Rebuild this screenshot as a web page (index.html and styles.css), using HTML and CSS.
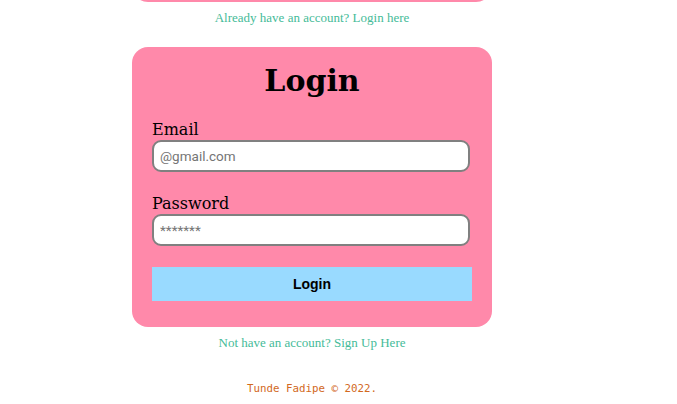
FILE: index.html
```html
<!DOCTYPE html>
<html lang="en">
<head>
<meta charset="utf-8">
<title>Login</title>
<link rel="stylesheet" href="styles.css">
</head>
<body>
<main class="page">
  <div class="card card-prev"></div>
  <a class="switch-link switch-top" href="#">Already have an account? Login here</a>
  <form class="card login-card">
    <h1 class="card-title">Login</h1>
    <label class="field">
      <span class="field-label">Email</span>
      <input class="field-input" type="email" placeholder="@gmail.com">
    </label>
    <label class="field">
      <span class="field-label">Password</span>
      <input class="field-input" type="password" placeholder="*******">
    </label>
    <button class="submit" type="button">Login</button>
  </form>
  <a class="switch-link switch-bottom" href="#">Not have an account? Sign Up Here</a>
  <footer class="footer">Tunde Fadipe © 2022.</footer>
</main>
</body>
</html>
```
FILE: styles.css
```css
html, body {
  margin: 0;
  padding: 0;
  background: #ffffff;
}
.page {
  width: 624px;
  display: flex;
  flex-direction: column;
  align-items: center;
  font-family: "DejaVu Serif", Georgia, serif;
}
.card {
  width: 360px;
  box-sizing: border-box;
  background: #ff89aa;
  border-radius: 16px;
}
.card-prev {
  height: 40px;
  margin-top: -38px;
}
.switch-link {
  color: #45bb98;
  text-decoration: none;
  font-family: "Liberation Serif", Georgia, serif;
  font-size: 13px;
  line-height: 15px;
}
.switch-top {
  margin-top: 8px;
  margin-bottom: 22px;
}
.login-card {
  padding: 14px 20px 26px;
  display: flex;
  flex-direction: column;
}
.card-title {
  margin: 0;
  text-align: center;
  font-size: 30px;
  line-height: 40px;
  font-weight: bold;
  color: #000;
}
.field {
  display: flex;
  flex-direction: column;
  margin-top: 19px;
}
.field + .field {
  margin-top: 22px;
}
.field-label {
  font-size: 16px;
  line-height: 20px;
  color: #000;
}
.field-input {
  width: 318px;
  height: 32px;
  box-sizing: border-box;
  border: 2px solid #808080;
  border-radius: 9px;
  background: #fff;
  padding: 0 6px;
  font-family: Roboto, "Liberation Sans", Arial, sans-serif;
  font-size: 13.5px;
  outline: none;
}
.field-input::placeholder {
  color: #757575;
}
.submit {
  margin-top: 21px;
  width: 320px;
  height: 34px;
  border: none;
  background: #99daff;
  font-family: "Liberation Sans", Arial, sans-serif;
  font-weight: bold;
  font-size: 14px;
  color: #000;
  padding: 0;
}
.switch-bottom {
  margin-top: 8px;
}
.footer {
  margin-top: 32px;
  font-family: "DejaVu Sans Mono", monospace;
  font-size: 10.8px;
  line-height: 14px;
  color: #d2691e;
}
```
